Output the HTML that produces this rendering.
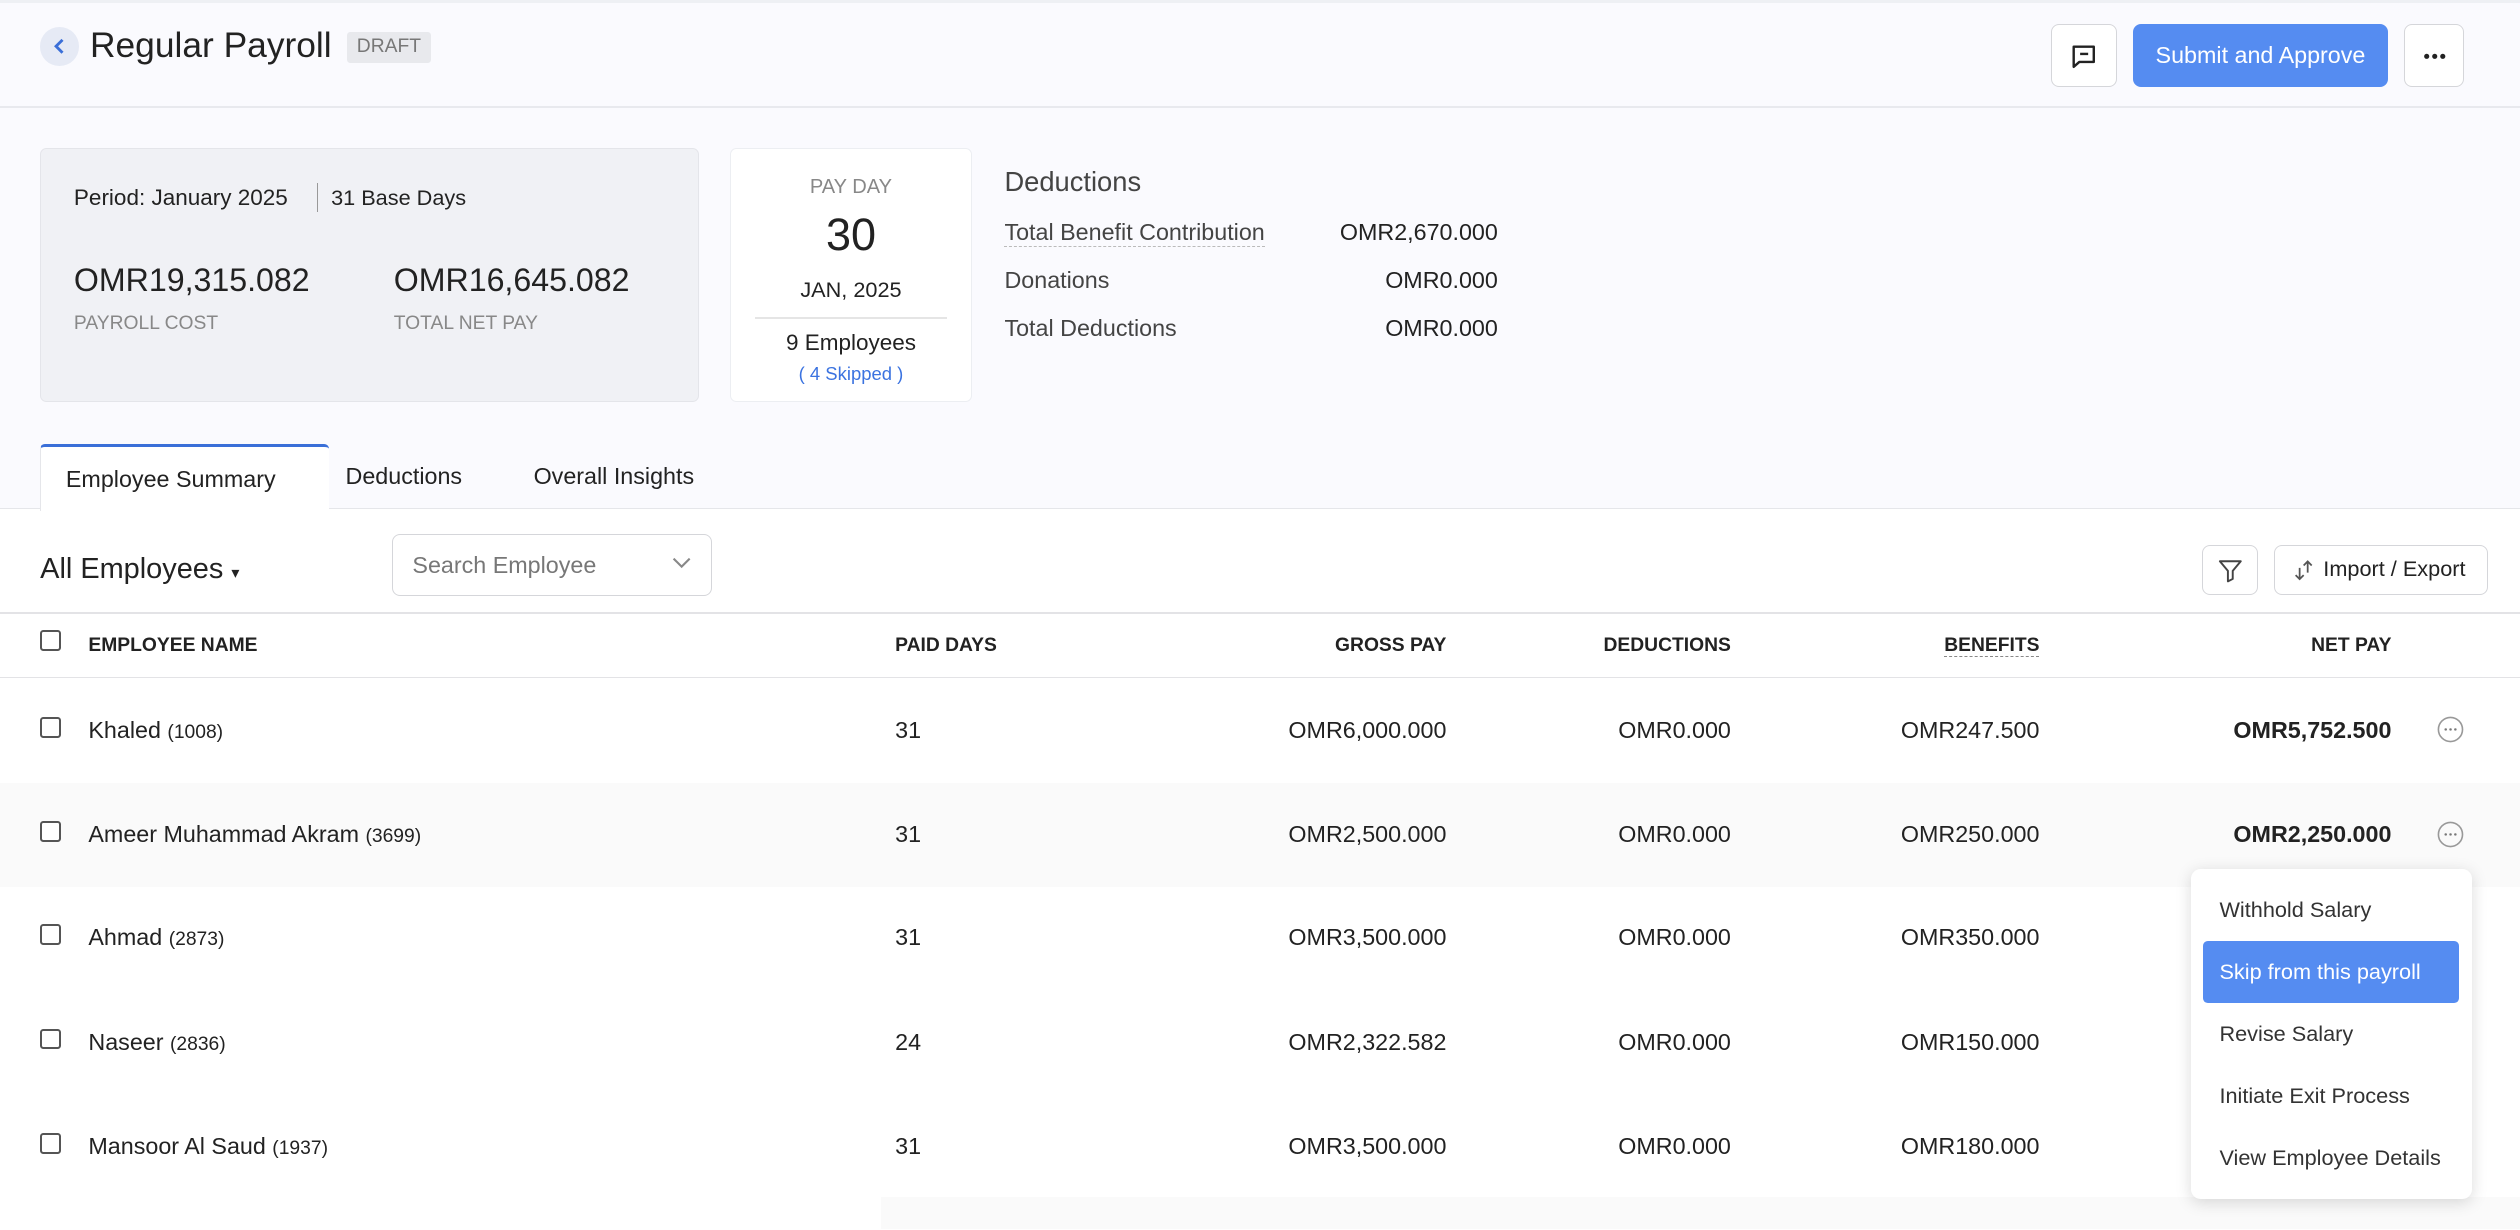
<!DOCTYPE html>
<html><head><meta charset="utf-8"><style>
*{box-sizing:border-box;margin:0;padding:0}
html,body{width:2520px;height:1230px;overflow:hidden;background:#fff}
#w{zoom:1.607143;width:1568px;height:765px;position:relative;font-family:"Liberation Sans",sans-serif;color:#222;background:#fff}
.a{position:absolute}
.top{left:0;top:0;width:1568px;height:317px;background:#fafafe;border-top:2px solid #eef0f4}
.hl{left:0;top:66px;width:1568px;height:1px;background:#e8e9ee}
.btn{border:1px solid #d5d6da;border-radius:5px;background:#fff}
.num{text-align:right;font-size:14.5px}
.row{left:0;width:1568px;height:65px}
.cb{width:13px;height:13px;border:1.3px solid #555;border-radius:2px;background:#fff}
.th{font-size:12px;font-weight:bold;color:#222;top:395px}
.menu div{height:38.5px;line-height:38.5px;padding-left:10px;font-size:13.5px;margin:0 8px;border-radius:3px;color:#333}
</style></head><body><div id="w">
<div class="a top"></div>
<div class="a hl"></div>
<div class="a" style="left:25px;top:17px;width:24px;height:24px;border-radius:50%;background:#e6eaf5"><svg width="24" height="24"><path d="M14 8l-4 4 4 4" stroke="#3b6fd8" stroke-width="1.8" fill="none"/></svg></div>
<div class="a" style="left:56px;top:16px;font-size:22px;color:#222">Regular Payroll</div>
<div class="a" style="left:216px;top:20px;height:19px;padding:0 6px;background:#e8e9ed;color:#777;font-size:12px;line-height:19px;border-radius:2px">DRAFT</div>
<div class="a btn" style="left:1276px;top:15px;width:41px;height:39px"><svg width="41" height="39"><path d="M13.5 13.5h12.5v9.5h-9l-3.5 3v-12.5z" stroke="#222" stroke-width="1.5" fill="none" stroke-linejoin="round"/><path d="M17.5 18h5" stroke="#222" stroke-width="1.5"/></svg></div>
<div class="a" style="left:1327px;top:15px;width:159px;height:39px;background:#558cf1;border-radius:5px;color:#fff;font-size:14.5px;line-height:39px;text-align:center">Submit and Approve</div>
<div class="a btn" style="left:1496px;top:15px;width:37px;height:39px"><svg width="37" height="39"><circle cx="13.5" cy="19.5" r="1.6" fill="#222"/><circle cx="18.5" cy="19.5" r="1.6" fill="#222"/><circle cx="23.5" cy="19.5" r="1.6" fill="#222"/></svg></div>
<div class="a" style="left:25px;top:92px;width:410px;height:158px;background:#f0f1f5;border:1px solid #e4e5ea;border-radius:4px"></div>
<div class="a" style="left:46px;top:115px;font-size:14px">Period: <span style="color:#222">January 2025</span></div>
<div class="a" style="left:197px;top:114px;width:1px;height:18px;background:#999"></div>
<div class="a" style="left:206px;top:115px;font-size:13.5px">31 Base Days</div>
<div class="a" style="left:46px;top:163px;font-size:20px">OMR19,315.082</div>
<div class="a" style="left:245px;top:163px;font-size:20px">OMR16,645.082</div>
<div class="a" style="left:46px;top:195px;font-size:12px;color:#888">PAYROLL COST</div>
<div class="a" style="left:245px;top:195px;font-size:12px;color:#888">TOTAL NET PAY</div>
<div class="a" style="left:454px;top:92px;width:151px;height:158px;background:#fff;border:1px solid #eceef2;border-radius:4px;text-align:center">
<div style="margin-top:17px;font-size:12.5px;color:#888">PAY DAY</div>
<div style="margin-top:6px;font-size:28px;color:#222">30</div>
<div style="margin-top:10px;font-size:13.5px">JAN, 2025</div>
<div style="margin:9px 15px 0;height:1px;background:#e5e5e5"></div>
<div style="margin-top:7px;font-size:14px">9 Employees</div>
<div style="margin-top:4px;font-size:11.5px;color:#3b73e0">( 4 Skipped )</div></div>
<div class="a" style="left:625px;top:103px;font-size:17px;color:#444">Deductions</div>
<div class="a" style="left:625px;top:136px;font-size:14.5px;color:#444;border-bottom:1px dashed #bbb">Total Benefit Contribution</div>
<div class="a" style="left:625px;top:166px;font-size:14.5px;color:#444">Donations</div>
<div class="a" style="left:625px;top:196px;font-size:14.5px;color:#444">Total Deductions</div>
<div class="a num" style="left:780px;width:152px;top:136px">OMR2,670.000</div>
<div class="a num" style="left:780px;width:152px;top:166px">OMR0.000</div>
<div class="a num" style="left:780px;width:152px;top:196px">OMR0.000</div>
<div class="a" style="left:0;top:316px;width:1568px;height:1px;background:#e5e6ea"></div>
<div class="a" style="left:25px;top:276px;width:180px;height:42px;background:#fff;border-top:2px solid #3a6fd8;border-left:1px solid #e5e6ea;border-radius:3px 3px 0 0"></div>
<div class="a" style="left:41px;top:290px;font-size:14.5px">Employee Summary</div>
<div class="a" style="left:215px;top:288px;font-size:14.5px">Deductions</div>
<div class="a" style="left:332px;top:288px;font-size:14.5px">Overall Insights</div>
<div class="a" style="left:25px;top:344px;font-size:18px">All Employees <span style="font-size:10px">▾</span></div>
<div class="a btn" style="left:244px;top:332px;width:199px;height:39px;font-size:14.5px;color:#777;line-height:38px;padding-left:12px">Search Employee<svg class="a" style="right:12px;top:14px" width="12" height="8"><path d="M1 1l5 5 5-5" stroke="#888" fill="none" stroke-width="1.3"/></svg></div>
<div class="a btn" style="left:1370px;top:339px;width:35px;height:31px"><svg width="35" height="31"><path d="M10.5 9.5h13l-5 6v5l-3 1.5v-6.5z" stroke="#444" fill="none" stroke-width="1.2" stroke-linejoin="round"/></svg></div>
<div class="a btn" style="left:1415px;top:339px;width:133px;height:31px;font-size:13.5px;line-height:29px;padding-left:30px;color:#222">Import / Export<svg class="a" style="left:9px;top:6px" width="18" height="18"><path d="M6 15V8M3.5 12.5L6 15l2.5-2.5M11 4v7M8.5 6.5L11 4l2.5 2.5" stroke="#555" fill="none" stroke-width="1.1"/></svg></div>
<div class="a" style="left:0;top:381px;width:1568px;height:1px;background:#e3e3e6"></div>
<div class="a" style="left:0;top:421px;width:1568px;height:1px;background:#e3e3e6"></div>
<div class="a cb" style="left:25px;top:392px"></div>
<div class="a th" style="left:55px">EMPLOYEE NAME</div>
<div class="a th" style="left:557px">PAID DAYS</div>
<div class="a th" style="left:780px;width:120px;text-align:right">GROSS PAY</div>
<div class="a th" style="left:950px;width:127px;text-align:right">DEDUCTIONS</div>
<div class="a th" style="left:1150px;width:119px;text-align:right"><span style="border-bottom:1px dashed #888">BENEFITS</span></div>
<div class="a th" style="left:1350px;width:138px;text-align:right">NET PAY</div>
<div class="a row" style="top:487px;background:#fafafa"></div>
<div class="a" style="left:548px;top:745px;width:1020px;height:20px;background:#fafafa"></div>

<div class="a cb" style="left:25px;top:446px"></div><div class="a" style="left:55px;top:446px;font-size:14.5px">Khaled <span style="font-size:12px">(1008)</span></div><div class="a" style="left:557px;top:446px;font-size:14.5px">31</div><div class="a num" style="left:700px;width:200px;top:446px">OMR6,000.000</div><div class="a num" style="left:900px;width:177px;top:446px">OMR0.000</div><div class="a num" style="left:1070px;width:199px;top:446px">OMR247.500</div><div class="a num" style="left:1300px;width:188px;top:446px;font-weight:bold">OMR5,752.500</div>
<div class="a cb" style="left:25px;top:511px"></div><div class="a" style="left:55px;top:511px;font-size:14.5px">Ameer Muhammad Akram <span style="font-size:12px">(3699)</span></div><div class="a" style="left:557px;top:511px;font-size:14.5px">31</div><div class="a num" style="left:700px;width:200px;top:511px">OMR2,500.000</div><div class="a num" style="left:900px;width:177px;top:511px">OMR0.000</div><div class="a num" style="left:1070px;width:199px;top:511px">OMR250.000</div><div class="a num" style="left:1300px;width:188px;top:511px;font-weight:bold">OMR2,250.000</div>
<div class="a cb" style="left:25px;top:575px"></div><div class="a" style="left:55px;top:575px;font-size:14.5px">Ahmad <span style="font-size:12px">(2873)</span></div><div class="a" style="left:557px;top:575px;font-size:14.5px">31</div><div class="a num" style="left:700px;width:200px;top:575px">OMR3,500.000</div><div class="a num" style="left:900px;width:177px;top:575px">OMR0.000</div><div class="a num" style="left:1070px;width:199px;top:575px">OMR350.000</div>
<div class="a cb" style="left:25px;top:640px"></div><div class="a" style="left:55px;top:640px;font-size:14.5px">Naseer <span style="font-size:12px">(2836)</span></div><div class="a" style="left:557px;top:640px;font-size:14.5px">24</div><div class="a num" style="left:700px;width:200px;top:640px">OMR2,322.582</div><div class="a num" style="left:900px;width:177px;top:640px">OMR0.000</div><div class="a num" style="left:1070px;width:199px;top:640px">OMR150.000</div>
<div class="a cb" style="left:25px;top:705px"></div><div class="a" style="left:55px;top:705px;font-size:14.5px">Mansoor Al Saud <span style="font-size:12px">(1937)</span></div><div class="a" style="left:557px;top:705px;font-size:14.5px">31</div><div class="a num" style="left:700px;width:200px;top:705px">OMR3,500.000</div><div class="a num" style="left:900px;width:177px;top:705px">OMR0.000</div><div class="a num" style="left:1070px;width:199px;top:705px">OMR180.000</div>
<svg class="a" style="left:1516px;top:445px" width="18" height="18"><circle cx="9" cy="9" r="7.5" stroke="#999" fill="none"/><path d="M6 9h.1M9 9h.1M12 9h.1" stroke="#777" stroke-width="1.5" stroke-linecap="round"/></svg>
<svg class="a" style="left:1516px;top:510px" width="18" height="18"><circle cx="9" cy="9" r="7.5" stroke="#999" fill="none"/><path d="M6 9h.1M9 9h.1M12 9h.1" stroke="#777" stroke-width="1.5" stroke-linecap="round"/></svg>
<div class="a menu" style="left:1363px;top:541px;width:175px;height:205px;background:#fff;border-radius:6px;box-shadow:0 2px 10px rgba(0,0,0,.15);padding-top:6px">
<div>Withhold Salary</div><div style="background:#558cf1;color:#fff">Skip from this payroll</div><div>Revise Salary</div><div>Initiate Exit Process</div><div>View Employee Details</div></div>
</div></body></html>
